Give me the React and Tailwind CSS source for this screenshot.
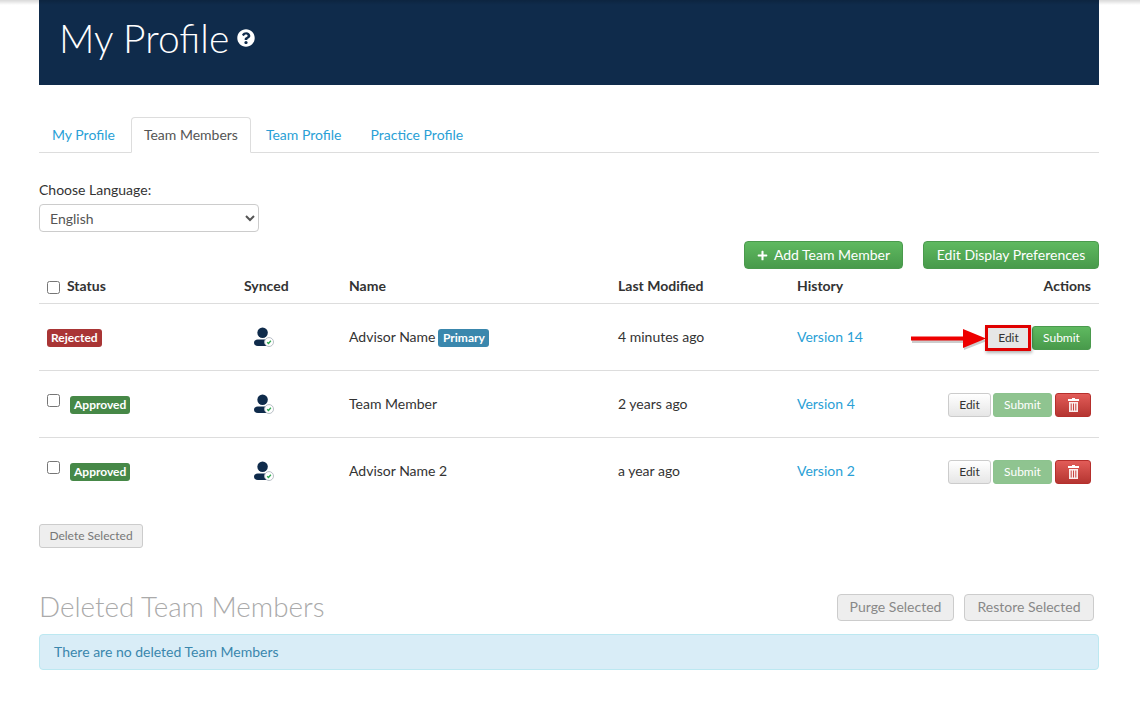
import React from 'react';
import { FaPlus, FaQuestionCircle } from 'react-icons/fa';

const members = [
  { id: 1, status: 'Rejected', name: 'Advisor Name', primary: true, modified: '4 minutes ago', version: 'Version 14' },
  { id: 2, status: 'Approved', name: 'Team Member', modified: '2 years ago', version: 'Version 4' },
  { id: 3, status: 'Approved', name: 'Advisor Name 2', modified: 'a year ago', version: 'Version 2' },
];

const SyncedIcon = () => (
  <svg width="20" height="20" viewBox="0 0 21 21" className="block">
    <circle cx="9" cy="6" r="5.500" fill="#0f2b4b" />
    <path d="M4 13h10c2.500 0 4 2 4 3.500s-1.500 3.500-4 3.500H4C1.500 20 0 18.200 0 16.500S1.500 13 4 13z" fill="#0f2b4b" />
    <circle cx="15.800" cy="15.800" r="4.700" fill="#fff" stroke="#b5bcc4" strokeWidth="1" />
    <path d="M13.800 16l1.400 1.300 2.500-2.800" fill="none" stroke="#2fa84f" strokeWidth="1.400" />
  </svg>
);

const TrashIcon = () => (
  <svg width="11" height="14" viewBox="0 0 11 14" className="block">
    <path d="M4 0h3v1h4v2H0V1h4z" fill="#fff" />
    <path d="M1 4h9v10H1zM2.700 5.500v7h1v-7zM5 5.500v7h1v-7zM7.300 5.500v7h1v-7z" fill="#fff" fillRule="evenodd" opacity="0.9" />
  </svg>
);

const Arrow = () => (
  <svg width="76" height="26" viewBox="0 0 76 26" className="block overflow-visible">
    <path d="M0 11h52V4l23 9-23 9v-7H0z" fill="#000" opacity="0.2" transform="translate(1 2)" />
    <path d="M0 10.500h52V3l23 9.500L52 22v-7.500H0z" fill="#ee0000" />
  </svg>
);

const Tab = ({ label, active }) => (
  active ? (
    <a className="h-[36px] -mb-px px-[12px] pb-[2px] flex items-center bg-white border border-[#ddd] border-b-white rounded-t-[4px] text-[#555]">{label}</a>
  ) : (
    <a className="h-[36px] pl-[13px] pr-[14px] mr-[2px] pb-[2px] flex items-center text-[#2a9fd6]">{label}</a>
  )
);

const EditButton = ({ pressed }) => (
  <button className={pressed
    ? 'h-[24px] w-[43px] text-[12px] text-[#333] border border-[#ccc] rounded-[3px] bg-[#e6e6e6]'
    : 'h-[24px] w-[43px] text-[12px] text-[#333] border border-[#ccc] rounded-[3px] bg-gradient-to-b from-white to-[#e6e6e6]'}>Edit</button>
);

const SubmitButton = ({ disabled }) => (
  <button className={disabled
    ? 'h-[24px] w-[59px] text-[12px] text-white border border-[#8cc38e] rounded-[3px] bg-[#8fc490]'
    : 'h-[24px] w-[59px] text-[12px] text-white border border-[#4a9a4d] rounded-[3px] bg-gradient-to-b from-[#5fb960] to-[#489a4b]'}>Submit</button>
);

const DeleteButton = () => (
  <button className="ml-[1px] h-[24px] w-[36px] flex items-center justify-center border border-[#b52f2c] rounded-[3px] bg-gradient-to-b from-[#e25c58] to-[#b53531]"><TrashIcon /></button>
);

const Badge = ({ color, children }) => (
  <span className={`mt-[2px] h-[18px] px-[4px] flex items-center rounded-[3px] text-white text-[12px] font-bold ${color}`}>{children}</span>
);

const Rows = () => (
  <div>
    {members.map(m => (
      <div key={m.id} className="h-[67px] border-b border-[#ddd] last:border-b-transparent grid grid-cols-[197px_105px_269px_179px_310px] items-center">
        <div className="px-[8px] flex items-center">
          {m.status === 'Rejected' ? (
            <Badge color="bg-[#a93535]">Rejected</Badge>
          ) : (
            <>
              <input type="checkbox" className="w-[13px] h-[13px] mb-[8px]" />
              <span className="ml-[10px]"><Badge color="bg-[#468847]">Approved</Badge></span>
            </>
          )}
        </div>
        <div className="pl-[18px]"><SyncedIcon /></div>
        <div className="px-[8px] flex items-center gap-[2px]">
          <span className="mb-[2px]">{m.name}</span>
          {m.primary && <span className="ml-[1px]"><Badge color="bg-[#3a87ad]"><span className="px-[0.500px]">Primary</span></Badge></span>}
        </div>
        <div className="px-[8px] pb-[2px]">{m.modified}</div>
        <div className="relative flex items-center justify-between px-[8px]">
          <a className="mb-[2px] text-[#2a9fd6]">{m.version}</a>
          <div className="flex items-center gap-[2px] mt-[2px]">
            <EditButton pressed={m.id === 1} />
            <SubmitButton disabled={m.id !== 1} />
            {m.id !== 1 && <DeleteButton />}
          </div>
          {m.id === 1 && (
            <>
              <div className="absolute left-[122px] top-[2px]"><Arrow /></div>
              <div className="absolute right-[68px] top-[1px] h-[26px] w-[46px] border-[3px] border-[#e00000] shadow-[1px_2px_3px_rgba(0,0,0,0.3)]"></div>
            </>
          )}
        </div>
      </div>
    ))}
  </div>
);

const App = () => {
  return (
    <div className="relative h-[710px] overflow-hidden bg-white text-[14px] text-[#333] font-['Lato','Liberation_Sans',sans-serif]">
      <div className="absolute top-0 left-0 right-0 h-[5px] bg-gradient-to-b from-black/15 to-transparent"></div>
      <div className="mx-[39px] w-[1060px]">
        {/* Page header */}
        <div className="h-[85px] bg-[#0f2b4b] pl-[20px] flex items-center pb-[9px] gap-[8px]">
          <h1 className="text-[39px] font-light text-white leading-none">My Profile</h1>
          <FaQuestionCircle className="text-white text-[18px]" />
        </div>

        {/* Tabs */}
        <div className="mt-[32px] h-[36px] flex border-b border-[#ddd]">
          <Tab label="My Profile" />
          <Tab label="Team Members" active />
          <div className="w-[2px]"></div>
          <Tab label="Team Profile" />
          <Tab label="Practice Profile" />
        </div>

        {/* Language */}
        <div className="mt-[27px] leading-[20px]">Choose Language:</div>
        <div className="mt-[4px] w-[220px]">
          <select className="block w-full h-[28px] pl-[6px] text-[14px] text-[#555] bg-white border border-[#ccc] rounded-[4px]">
            <option>English</option>
          </select>
        </div>

        <div className="mt-[9px] flex justify-end gap-[20px]">
          <button className="h-[28px] w-[159px] pb-[2px] flex items-center justify-center gap-[6px] text-white border border-[#4a9a4d] rounded-[4px] bg-gradient-to-b from-[#5fb960] to-[#489a4b]">
            <FaPlus className="text-[11px] mt-[2px]" /> Add Team Member
          </button>
          <button className="h-[28px] w-[176px] pb-[2px] text-white border border-[#4a9a4d] rounded-[4px] bg-gradient-to-b from-[#5fb960] to-[#489a4b]">Edit Display Preferences</button>
        </div>

        {/* Members table */}
        <div className="h-[35px] pb-[2px] border-b border-[#ddd] font-bold grid grid-cols-[197px_105px_269px_179px_310px] items-center">
          <div className="px-[8px] flex items-center gap-[7px]">
            <input type="checkbox" className="w-[13px] h-[13px] mt-[5px]" />
            Status
          </div>
          <div className="px-[8px]">Synced</div>
          <div className="px-[8px]">Name</div>
          <div className="px-[8px]">Last Modified</div>
          <div className="px-[8px] flex justify-between">
            <span>History</span>
            <span>Actions</span>
          </div>
        </div>
        <Rows />

        <button className="mt-[19px] h-[24px] w-[104px] text-[12px] text-[#777] bg-[#eee] border border-[#ccc] rounded-[3px] block">Delete Selected</button>

        {/* Deleted members */}
        <div className="mt-[46px] flex items-center justify-between">
          <h2 className="text-[27.800px] font-light text-[#aaa] leading-[25px] pb-[2px]">Deleted Team Members</h2>
          <div className="flex gap-[10px] mr-[5px]">
            <button className="h-[27px] w-[117px] pb-[2px] text-[#888] bg-[#eee] border border-[#ccc] rounded-[4px]">Purge Selected</button>
            <button className="h-[27px] w-[130px] pb-[2px] text-[#888] bg-[#eee] border border-[#ccc] rounded-[4px]">Restore Selected</button>
          </div>
        </div>
        <div className="mt-[13px] h-[36px] px-[14px] pb-[2px] flex items-center bg-[#d9edf7] border border-[#bce8f1] rounded-[4px] text-[#3a87ad]">There are no deleted Team Members</div>
      </div>
    </div>
  );
};

export default App;
